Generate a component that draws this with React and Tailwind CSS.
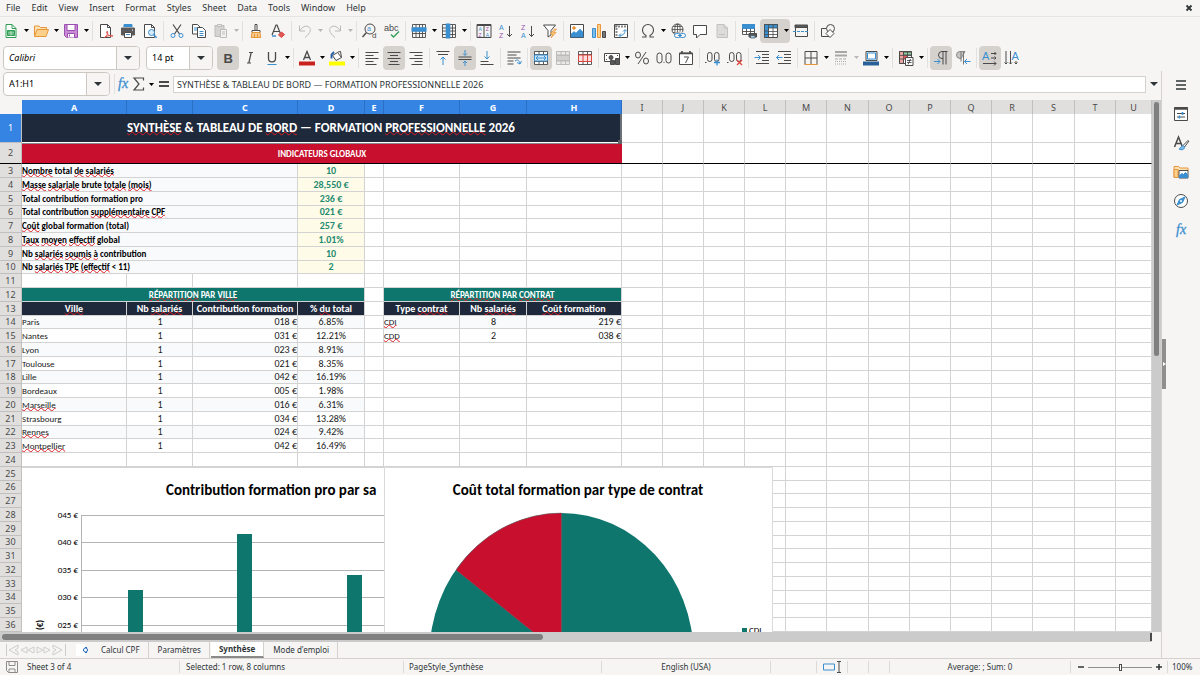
import { useState } from 'react'

// --- Sheet data ----------------------------------------------------------
// Words between ~ are flagged by the spell checker
const INDICATORS = [
  ['~Nombre~ total ~de~ ~salariés~', '10'],
  ['~Masse~ ~salariale~ brute ~totale~ ~(mois)~', '28,550 €'],
  ['Total contribution formation pro', '236 €'],
  ['Total contribution ~supplémentaire~ ~CPF~', '021 €'],
  ['~Coût~ global formation (total)', '257 €'],
  ['~Taux~ ~moyen~ ~effectif~ global', '1.01%'],
  ['Nb ~salariés~ ~soumis~ ~à~ contribution', '10'],
  ['Nb ~salariés~ ~TPE~ ~(effectif~ < 11)', '2'],
]

const CITIES = [
  ['Paris', '1', '018 €', '6.85%'],
  ['Nantes', '1', '031 €', '12.21%'],
  ['Lyon', '1', '023 €', '8.91%'],
  ['Toulouse', '1', '021 €', '8.35%'],
  ['Lille', '1', '042 €', '16.19%'],
  ['Bordeaux', '1', '005 €', '1.98%'],
  ['~Marseille~', '1', '016 €', '6.31%'],
  ['Strasbourg', '1', '034 €', '13.28%'],
  ['~Rennes~', '1', '024 €', '9.42%'],
  ['~Montpellier~', '1', '042 €', '16.49%'],
]

const CONTRACTS = [
  ['~CDI~', '8', '219 €'],
  ['~CDD~', '2', '038 €'],
]

const LETTERS = 'ABCDEFGHIJKLMNOPQRSTU'.split('')
const MENUS = ['File', 'Edit', 'View', 'Insert', 'Format', 'Styles', 'Sheet', 'Data', 'Tools', 'Window', 'Help']
const SHEETS = ['Calcul CPF', 'Paramètres', 'Synthèse', "Mode d'emploi"]

const BLUE = '#3a8fd0'
const DARK = '#4a4a4a'
const GREEN = '#2f9e55'
const ORANGE = '#e8963a'
const RED = '#d9453c'
const PURPLE = '#9b4fb0'

// --- Icons ---------------------------------------------------------------
const Svg = ({ children }) => (
  <svg viewBox="0 0 16 16" className="h-4 w-4 shrink-0 overflow-visible fill-none stroke-[#4a4a4a]" aria-hidden="true">{children}</svg>
)

const T = ({ x, y, size = 8, color = DARK, bold, children }) => (
  <text x={x} y={y} fontSize={size} fill={color} stroke="none" fontWeight={bold ? 700 : 400} fontFamily="Liberation Sans, sans-serif">{children}</text>
)

const ICONS = {
  new: <><path d="M3 1.500h6l4 4v9H3z" fill="#fff" stroke={GREEN} /><path d="M9 1.500v4h4" stroke={GREEN} /><path d="M4.500 7.500h7v5h-7z" fill={GREEN} stroke={GREEN} /><path d="M5 9.200h6M5 11h6M8 8v4.500" stroke="#d8f0df" strokeWidth=".7" /></>,
  open: <><path d="M1.500 13.500V3h4.500l1.500 1.500h6V7" fill="#fbe2b4" stroke={ORANGE} /><path d="M1.500 13.500L4 6.500h11.500l-2.500 7z" fill="#fbd08a" stroke={ORANGE} /></>,
  save: <><path d="M1.500 1.500h13v13h-11l-2-2z" fill="#c98bd6" stroke={PURPLE} /><path d="M4 1.500h8v6H4z" fill="#fff" stroke={PURPLE} /><path d="M4.500 14.500v-4h7v4" fill="#fff" stroke={PURPLE} /><path d="M6.500 11.500v2" stroke={PURPLE} /></>,
  pdf: <><path d="M2.500 1.500h7l3 3v10h-10z" fill="#fff" /><path d="M9.500 1.500v3h3" /><path d="M6.500 14.500c2.500-1.500 3.500-3.500 3-6-.8-.6-1.200.4-.6 1.600 1 2 3 3.200 5.600 3.200 1-.4.200-1.200-2-.9-2.400.3-4.600 1-6 2.100z" fill="#fff" stroke={RED} strokeWidth=".9" /></>,
  print: <><path d="M4 4V1.500h8V4" fill={BLUE} stroke={BLUE} /><path d="M1.500 5h13v7h-13z" fill="#5a5a5a" stroke="#5a5a5a" /><path d="M4.500 9.500h7v5h-7z" fill="#fff" /><path d="M6 11.500h4" stroke={BLUE} /><path d="M12 7h1" stroke="#fff" /></>,
  preview: <><path d="M2.500 1.500h7l3 3v10h-10z" fill="#fff" /><path d="M9.500 1.500v3h3" /><circle cx="9.500" cy="9.500" r="3" fill="#d7eaf8" stroke={BLUE} /><path d="M11.700 11.700l3 3" stroke={BLUE} strokeWidth="1.400" /></>,
  cut: <><path d="M4 1.500l6.500 9.500M12 1.500L5.500 11" strokeWidth="1.200" /><circle cx="4" cy="12.500" r="2" stroke={BLUE} /><circle cx="12" cy="12.500" r="2" stroke={BLUE} /></>,
  copy: <><path d="M1.500 1.500h5l3 3v6.500h-8z" fill="#fff" /><path d="M3 5h4M3 7h4" stroke={BLUE} /><path d="M6.500 4.500h5l3 3v7h-8z" fill="#fff" /><path d="M8.500 8.500h4M8.500 10.500h4M8.500 12.500h4" stroke={BLUE} /></>,
  paste: <g stroke="#bdbbb9"><path d="M2 2.500h9v11H2z" fill="#d6d4d2" /><path d="M4.500 1.500h4v2h-4z" fill="#eee" /><path d="M7.500 6.500h6v8h-6z" fill="#f4f3f2" /><path d="M9 9h3M9 11h3" /></g>,
  clone: <><path d="M7 1.500h2v6H7z" fill="#fff" /><path d="M4 7.500h8v2H4z" fill="#fff" /><path d="M4 9.500l-.8 5h9.600l-.8-5z" fill="#f7c98f" stroke={ORANGE} /><path d="M6.500 11v3M9.500 11v3" stroke={ORANGE} /></>,
  clear: <><path d="M2 12L6 2h1l4 10M3.500 8.500h6" strokeWidth="1.200" /><path d="M2 13h4" stroke={BLUE} strokeWidth="1.500" /><path d="M8.500 12l3-3 3 2.500-3 3z" fill="#e4575a" stroke={RED} /></>,
  undo: <path d="M2.500 2.500v5.500H8M3 7.500C5.500 3.500 8.500 2.500 11 3.500c4 2 3 6-3 11" stroke="#bdbbb9" />,
  redo: <path d="M13.500 2.500v5.500H8M13 7.500C10.500 3.500 7.500 2.500 5 3.500c-4 2-3 6 3 11" stroke="#bdbbb9" />,
  find: <><circle cx="8" cy="6" r="5" stroke={DARK} /><path d="M4.500 9.500l-4 4.500" strokeWidth="1.400" /><T x={5} y={8} size={7} color={BLUE}>a</T><T x={10} y={15} size={8}>d</T></>,
  spell: <><T x={0} y={8} size={9}>abc</T><path d="M7 11.500l2.500 2.500L15 8.500" stroke={GREEN} strokeWidth="1.300" /></>,
  row: <><path d="M1.500 1.500h13v13h-13zM1.500 10.500h13M5 1.500v13M8.500 1.500v13M11.500 1.500v13" fill="none" strokeWidth=".9" /><path d="M.8 4.500h14.400v4H.8z" fill={BLUE} stroke={BLUE} strokeWidth=".6" /></>,
  column: <><path d="M1.500 1.500h13v13h-13zM1.500 5h13M1.500 8h13M1.500 11.500h13M11.500 1.500v13" strokeWidth=".9" /><path d="M5 .8h4v14.400H5z" fill={BLUE} stroke={BLUE} strokeWidth=".6" /></>,
  sort: <><path d="M1 1.500h14v13H1zM8 2v12.500" /><path d="M1 2h14" strokeWidth="2" /><T x={2.500} y={8} size={5} color={BLUE}>A</T><T x={2.500} y={13.800} size={5} color={PURPLE}>Z</T><T x={9.800} y={8} size={5} color={PURPLE}>Z</T><T x={9.800} y={13.800} size={5} color={BLUE}>A</T></>,
  asc: <><T x={1} y={6.500} size={7} color={BLUE}>A</T><T x={1} y={15} size={7} color={PURPLE}>Z</T><path d="M11.500 3v10.500M9 11l2.500 2.500L14 11" /></>,
  desc: <><T x={1} y={6.500} size={7} color={PURPLE}>Z</T><T x={1} y={15} size={7} color={BLUE}>A</T><path d="M11.500 3v10.500M9 11l2.500 2.500L14 11" /></>,
  filter: <><path d="M1.500 2h12L9 7.500V12l-3 2V7.500z" fill="#fff" /><path d="M12.500 6L8.500 11h2.500l-2 4 5-5.500h-2.500L14.500 6z" fill="#fbd08a" stroke={ORANGE} strokeWidth=".8" /></>,
  image: <><path d="M1.500 1.500h13v13h-13z" fill="#fff" /><path d="M2 14v-3l3-2.500 2 1.500 4-4 3 3v5z" fill={BLUE} stroke={BLUE} strokeWidth=".5" /><circle cx="5" cy="5" r="1.300" fill={ORANGE} stroke={ORANGE} /></>,
  chart: <><path d="M1.500 5.500h3v9h-3z" fill="#7fbbe6" stroke={BLUE} /><path d="M6.500 1.500h3v13h-3z" fill="#fbd08a" stroke={ORANGE} /><path d="M11.500 8.500h3v6h-3z" fill="#777" /></>,
  pivot: <><path d="M1.500 1.500h13v13h-13z" fill="#fff" /><path d="M2 3.500h12M3.500 2v12" stroke="#888" strokeWidth="2" strokeDasharray="2 1" /><path d="M6.500 12.500c4 0 5.500-2 5.500-5.500M10 8.500l2-2 2 2M8 10.500l-2 2 2 2" stroke={BLUE} /></>,
  omega: <path d="M2 14h4v-1.500C3.500 11 2.500 9.500 2.500 7a5.500 5.500 0 0111 0c0 2.500-1 4-3.500 5.500V14h4" strokeWidth="1.100" />,
  link: <><circle cx="7.500" cy="6.500" r="5.500" /><path d="M2 6.500h11M7.500 1v11M3 3.500h9M3 9.500h6" strokeWidth=".8" /><ellipse cx="7.500" cy="6.500" rx="2.700" ry="5.500" strokeWidth=".8" /><path d="M5 9.500h11v6H5z" fill="#f6f5f4" stroke="none" /><rect x="4.500" y="10.500" width="6" height="4" rx="2" stroke={BLUE} /><rect x="9.500" y="10.500" width="6" height="4" rx="2" stroke={BLUE} /><path d="M8 12.500h4" stroke={BLUE} /></>,
  comment: <path d="M1.500 2.500h13v9H8l-3.500 3.500v-3.500h-3z" fill="#fff" />,
  header: <g stroke="#c4c2c0"><path d="M3 1.500h7l3.500 3.500v9.500H3z" fill="#dedcda" /><path d="M10 1.500V5h3.500M5 11.500h6" /></g>,
  printArea: <><path d="M1.500 1.500h12v10h-12zM1.500 8.500h12M5.500 1.500v10M9.500 1.500v10" fill="#fff" strokeWidth=".9" /><path d="M1.500 1.500h12v4h-12z" fill={BLUE} stroke={BLUE} /><path d="M8 10.500h7.500v3.500H8z" fill="#5a5a5a" /><path d="M9.500 12.500h4.500v2.500H9.500z" fill="#9ed0f2" strokeWidth=".7" /></>,
  freeze: <><path d="M1.500 1.500h13v13h-13z" fill="#fff" /><path d="M1.500 1.500h13v3.500h-9v9.500h-4z" fill={BLUE} stroke={DARK} strokeWidth=".8" /><path d="M5.500 5v9.500M10 1.500v13M5.500 8.500h9M5.500 11.500h9M1.500 8h4M1.500 11.500h4M5.500 1.500v4" strokeWidth=".8" /></>,
  split: <><path d="M2 2h12.500v2.500H2z" fill="#5a5a5a" /><path d="M2.500 4v9.500h12V4" /><path d="M0 8.500h16" stroke={BLUE} strokeDasharray="3 1" /></>,
  shapes: <><path d="M1.500 5.500h8v8h-8z" /><circle cx="10.500" cy="5.500" r="4" fill="#f6f5f4" /><path d="M6 10.500l4-4 4 4-4 4z" fill="#fff" /></>,
  bold: <T x={3.500} y={12.500} size={13} bold>B</T>,
  italic: <path d="M7 2.500h4M5 13h4M9.200 2.500L6.800 13" strokeWidth="1.200" />,
  underline: <><path d="M4.500 2v6.500c0 4.500 7 4.500 7 0V2" strokeWidth="1.300" /><path d="M3.500 14.500h9" stroke={BLUE} /></>,
  fontColor: <><path d="M4.500 10L8 1.500 11.500 10M5.500 7.500h5" strokeWidth="1.300" /><path d="M0 11.500h16v4H0z" fill="#c9211e" stroke="none" /></>,
  highlight: <><path d="M3.500 5.500l5-3 4 5-5.500 3z" fill="#fff" /><path d="M9 2l2.500-.5 1 6" /><path d="M5 2L2.500 4.500v4" stroke="#1f5fa8" strokeWidth="1.800" /><path d="M0 11.500h16v4H0z" fill="#ffff00" stroke="none" /></>,
  left: <path d="M1.500 2.500h13M1.500 5.500h8M1.500 8.500h13M1.500 11.500h8M1.500 14.500h11" />,
  center: <path d="M1.500 2.500h13M4 5.500h8M1.500 8.500h13M4 11.500h8M2.500 14.500h11" />,
  right: <path d="M1.500 2.500h13M6.500 5.500h8M1.500 8.500h13M6.500 11.500h8M3.500 14.500h11" />,
  top: <><path d="M1.500 1.500h13M3 4.500h10" /><path d="M8 15V7M5.500 9.500L8 7l2.500 2.500" stroke={BLUE} /></>,
  middle: <><path d="M1.500 7h13M1.500 9.500h13" /><path d="M8 0v5M6 3.500L8 5.500l2-2M8 16v-5M6 13l2-2 2 2" stroke={BLUE} /></>,
  bottom: <><path d="M1.500 14.500h13M1.500 11.500h8" /><path d="M8 1v8M5.500 6.500L8 9l2.500-2.500" stroke={BLUE} /></>,
  wrap: <><path d="M1.500 2h13M1.500 5h9M1.500 8h13M1.500 11h6M1.500 14h6" /><path d="M9 11c3-2 4-1 5 3M11 12.500l3 1.500 1.500-3" stroke={BLUE} /></>,
  merge: <><path d="M1.500 1.500h13v13h-13zM1.500 4.500h13M1.500 11.500h13M6 1.500v3M10.500 1.500v3M6 11.500v3M10.500 11.500v3" fill="#fff" strokeWidth=".9" /><path d="M1.500 5h13v6h-13z" fill="#cfe6f7" stroke={BLUE} /><path d="M3 8h10M5 6L3 8l2 2M11 6l2 2-2 2" stroke={BLUE} /></>,
  unmerge: <g stroke="#bdbbb9"><path d="M1.500 1.500h13v13h-13zM1.500 5h13M1.500 11h13M6 1.500V5M10.500 1.500V5M6 11v3.500M10.500 11v3.500" fill="#eceae9" /><path d="M1.500 5.500h13v5h-13z" fill="#d2d0ce" /></g>,
  splitCells: <><path d="M1.500 1.500h13v13h-13zM1.500 4.500h13M1.500 11.500h13M6 1.500v3M10.500 1.500v3M6 11.500v3M10.500 11.500v3" fill="#fff" strokeWidth=".9" /><path d="M1.500 5h13v6.500h-13zM6 5v6.500M10.500 5v6.500" fill="#fbe0de" stroke={RED} /></>,
  currency: <><path d="M.5 3.500h15v8H.5z" fill="#fff" /><circle cx="7" cy="7.500" r="2" fill="#5a5a5a" /><path d="M2 5.500h1M13 5.500h1M2 9.500h1" /><path d="M6.500 10.500h4v4h-4zM11.500 8.500h4v6h-4z" fill="#5a5a5a" /></>,
  percent: <><ellipse cx="4" cy="5" rx="2.500" ry="3" /><ellipse cx="12" cy="11" rx="2.500" ry="3" /><path d="M12 2L4 14" /></>,
  number: <><rect x="1" y="3" width="5" height="10" rx="2.500" /><rect x="10" y="3" width="5" height="10" rx="2.500" /><path d="M7.500 12.500h1" /></>,
  date: <><path d="M1.500 3h13v11.500h-13z" fill="#fff" /><path d="M1.500 3.500h13M4 1v3M12 1v3" strokeWidth="1.600" /><path d="M6 7h4.500L7.500 13" /></>,
  addDec: <><rect x="2.500" y="2.500" width="4.500" height="9" rx="2.200" /><rect x="9.500" y="2.500" width="4.500" height="9" rx="2.200" /><path d="M0 12.500h1.500" /><path d="M9 12.500h6M12 9.500v6" stroke={BLUE} strokeWidth="1.300" /></>,
  delDec: <><rect x="2.500" y="2.500" width="4.500" height="9" rx="2.200" /><rect x="9.500" y="2.500" width="4.500" height="9" rx="2.200" /><path d="M0 12.500h1.500" /><path d="M10 10l5 5M15 10l-5 5" stroke={RED} strokeWidth="1.300" /></>,
  indent: <><path d="M2 1.500h13M8 4.500h7M8 7.500h7M8 10.500h7M2 13.500h13" /><path d="M.5 7.500h6M4 5l2.500 2.500L4 10" stroke={BLUE} /></>,
  outdent: <><path d="M2 1.500h13M8 4.500h7M8 7.500h7M8 10.500h7M2 13.500h13" /><path d="M.5 7.500h6M3 5L.5 7.500 3 10" stroke={BLUE} /></>,
  borders: <><path d="M2 14.500v-13h12v13M8 1.500v13M2 8h12" fill="none" /><path d="M1.500 14.500h13" stroke={ORANGE} /></>,
  lineStyle: <g stroke="#a9a7a5"><path d="M2 2h12" strokeWidth="2" /><path d="M2 5.500h12" strokeWidth="2" /><path d="M2 9h12" strokeDasharray="3 1" /><path d="M2 11.500h12M2 14h12" strokeDasharray="1 1" /></g>,
  lineColor: <><path d="M3 1.500h11v9H3z" fill="#e6f2fb" stroke={DARK} /><path d="M4.500 3h8v6h-8z" fill="#fff" stroke={BLUE} /><path d="M0 11.500h16v4H0z" fill="#2a6099" stroke="none" /></>,
  cond: <><path d="M1.500 1.500h12v12h-12z" fill="#fff" /><path d="M1.500 1.500h4v12h-4z" fill="#e9a49f" /><path d="M5.500 2h8v3h-8z" fill="#8ccf9f" /><path d="M5.500 5.500h4v3.500h-4z" fill="#e4575a" stroke="none" /><path d="M1.500 5.500h12M1.500 9h12M9.500 1.500v12" strokeWidth=".8" /><path d="M7.500 7.500h7.500v8H7.500z" fill="#fff" /><path d="M9 10.500h4.500M9 12.500h4.500M12.500 9l-2.500 5.500" strokeWidth=".9" /></>,
  ltr: <><path d="M14.500 1.500H9a3.500 3.500 0 000 7h1M10 1.500v13M13 1.500v13" /><path d="M1 11.500h6M4.500 9L7 11.500 4.500 14" stroke={BLUE} /></>,
  rtl: <><path d="M10 1.500H5a3.500 3.500 0 000 7h1z" fill="#c8c6c4" stroke="#8d8b89" /><path d="M6 1.500v10M8.500 1.500v13" stroke="#777" /><path d="M9.500 11.500h6M12 9l-2.500 2.500L12 14" stroke={BLUE} /></>,
  horizontal: <><T x={0} y={10} size={11} color={BLUE}>A</T><path d="M9 3.500h5M12.500 2L14 3.500 12.500 5M9 8h5M12.500 6.500L14 8l-1.500 1.500M1 13.500h13M12 11.500l2 2-2 2" /></>,
  vertical: <><T x={7.500} y={10} size={11} color={BLUE}>A</T><path d="M2 1v13M.5 12.500L2 14l1.500-1.500M6.500 1v13M5 12.500L6.500 14 8 12.500M12 11v3M10.500 12.500L12 14l1.500-1.500" /></>,
  fx: <text x="3" y="12" fontSize="14" fontStyle="italic" fontFamily="Liberation Serif, serif" fill={BLUE} stroke={BLUE} strokeWidth=".3">fx</text>,
  sigma: <path d="M12.500 4.500V2H3l5 6-5 6h9.500v-2.500" strokeWidth="1.200" />,
  equals: <path d="M3 6h10M3 10h10" strokeWidth="1.800" />,
  menu: <path d="M3 4h10M3 8h10M3 12h10" strokeWidth="1.500" stroke="#2e3436" />,
  props: <><path d="M1.500 1.500h13v13h-13z" fill="#fff" /><path d="M1.500 2.500h13" strokeWidth="2.500" /><path d="M4 7.500h8M4 11h8" stroke={DARK} /><path d="M9.500 6v3M6.500 9.500v3" stroke={BLUE} strokeWidth="1.600" /></>,
  styles: <><path d="M1.500 12L5.500 2l4 10M3 8.500h5" strokeWidth="1.500" /><path d="M15.500 5L10 10.500l1.500 1.500L16 6" fill="#fff" /><path d="M10 10.500c-2 0-2 3-4 3.500 3 1.500 5.500.5 5.500-2z" fill="#7fbbe6" stroke={BLUE} /></>,
  gallery: <><path d="M1 13.500V2.500h4.500L7 4h8v3" fill="#fbe2b4" stroke={ORANGE} /><path d="M1 13.500V5.500h4v8z" fill="#fbd08a" stroke={ORANGE} /><path d="M6 6.500h9v7.500H6z" fill="#fff" /><path d="M6.500 13.500v-2l2.500-2 1.500 1 2-2 2 2v3z" fill={BLUE} stroke={BLUE} /></>,
  navigator: <><circle cx="8" cy="8" r="6.500" fill="#fff" /><path d="M12 4L9.500 9.500 4 12l2.500-5.500z" fill={BLUE} stroke={BLUE} /><circle cx="8" cy="8" r="1" fill="#fff" stroke="none" /></>,
  diskette: <><path d="M2.500 2.500h11v11h-9l-2-2z" stroke="#8d8b89" /><path d="M5 2.500h6v4H5zM5 13.500v-3.500h6v3.500" stroke="#8d8b89" /></>,
}

// --- Toolbars ------------------------------------------------------------
// '|' is a separator, 'v' adds a drop-down ('vd' a disabled one), 'on' a pressed button
const STANDARD = [
  ['new', 'New', 'v'], ['open', 'Open', 'v'], ['save', 'Save', 'v'], '|',
  ['pdf', 'Export as PDF'], ['print', 'Print'], ['preview', 'Print preview'], '|',
  ['cut', 'Cut'], ['copy', 'Copy'], ['paste', 'Paste', 'vd'], '|',
  ['clone', 'Clone formatting'], ['clear', 'Clear formatting'], '|',
  ['undo', 'Undo', 'vd'], ['redo', 'Redo', 'vd'], '|',
  ['find', 'Find and replace'], ['spell', 'Spelling'], '|',
  ['row', 'Row', 'v'], ['column', 'Column', 'v'], '|',
  ['sort', 'Sort'], ['asc', 'Sort ascending'], ['desc', 'Sort descending'], ['filter', 'AutoFilter'], '|',
  ['image', 'Insert image'], ['chart', 'Insert chart'], ['pivot', 'Insert pivot table'], '|',
  ['omega', 'Special character', 'v'], ['link', 'Insert hyperlink'], ['comment', 'Insert comment'], ['header', 'Headers and footers'], '|',
  ['printArea', 'Define print area'], ['freeze', 'Freeze rows and columns', 'v', 'on'], ['split', 'Split window'], '|',
  ['shapes', 'Show draw functions'],
]

const FORMATTING = [
  ['bold', 'Bold', '', 'on'], ['italic', 'Italic'], ['underline', 'Underline', 'v'], '|',
  ['fontColor', 'Font color', 'v'], ['highlight', 'Background color', 'v'], '|',
  ['left', 'Align left'], ['center', 'Center horizontally', '', 'on'], ['right', 'Align right'], '|',
  ['top', 'Align top'], ['middle', 'Center vertically', '', 'on'], ['bottom', 'Align bottom'], '|',
  ['wrap', 'Wrap text'], '|',
  ['merge', 'Merge and center cells', '', 'on'], ['unmerge', 'Merge cells'], ['splitCells', 'Unmerge cells'], '|',
  ['currency', 'Format as currency', 'v'], ['percent', 'Format as percent'], ['number', 'Format as number'], ['date', 'Format as date'], '|',
  ['addDec', 'Add decimal place'], ['delDec', 'Delete decimal place'], '|',
  ['indent', 'Increase indent'], ['outdent', 'Decrease indent'], '|',
  ['borders', 'Borders', 'v'], ['lineStyle', 'Border style', 'vd'], ['lineColor', 'Border color', 'v'], '|',
  ['cond', 'Conditional', 'v'], '|',
  ['ltr', 'Left-to-right', '', 'on'], ['rtl', 'Right-to-left'], '|',
  ['horizontal', 'Text direction left to right', '', 'on'], ['vertical', 'Text direction top to bottom'],
]

const Caret = ({ disabled }) => (
  <svg viewBox="0 0 5 3" className={`h-[3px] w-[5px] ${disabled ? 'fill-[#b9b7b5]' : 'fill-black'}`} aria-hidden="true"><path d="M0 0h5L2.500 3z" /></svg>
)

const Tools = ({ items }) => items.map((item, i) => {
  if (item === '|') return <span key={i} className="flex h-5 w-[5px] shrink-0 justify-center"><span className="w-px bg-[#e3e1df]" /></span>
  const [icon, label, drop, on] = item
  return (
    <span key={i} className={`flex h-6 shrink-0 rounded ${on ? 'bg-[#d5d1cd]' : ''}`}>
      <button type="button" aria-label={label} className="flex w-[22px] items-center justify-center"><Svg>{ICONS[icon]}</Svg></button>
      {drop && <button type="button" aria-label={`${label} options`} className="flex w-2 items-center justify-center"><Caret disabled={drop === 'vd'} /></button>}
    </span>
  )
})

const Combo = ({ label, value, className = '', inputClass = '' }) => (
  <div className={`flex h-6 shrink-0 overflow-hidden rounded border border-[#cdc7c2] bg-white ${className}`}>
    <input aria-label={label} defaultValue={value} className={`min-w-0 flex-1 px-[5px] text-[9px] text-black outline-none ${inputClass}`} />
    <button type="button" aria-label={`${label} list`} className="flex w-[23px] items-center justify-center border-l border-[#cdc7c2] bg-[#f6f5f4]">
      <svg viewBox="0 0 8 4" className="h-1 w-2 fill-[#2e3436]" aria-hidden="true"><path d="M0 0h8L4 4z" /></svg>
    </button>
  </div>
)

// --- Grid ----------------------------------------------------------------
const Words = ({ text }) => text.split('~').map((part, i) =>
  i % 2 ? <span key={i} className="underline decoration-[#e01b24] decoration-wavy decoration-1 -underline-offset-1 [text-decoration-skip-ink:none]">{part}</span> : part
)

const Cell = ({ text = '', span = 1, className = '' }) => (
  <td colSpan={span} className={`overflow-hidden whitespace-nowrap border-b border-r border-[#d3d3d3] p-0 leading-[12px] ${className}`}>
    <Words text={text} />
  </td>
)

const Blank = ({ count }) => Array.from({ length: count }, (_, i) => <Cell key={i} />)

const headCell = 'bg-[#1e293b] text-center text-[10px] font-bold text-white'
const bandCell = 'bg-[#0f766e] text-center text-[9px] font-bold text-white'

function RowCells({ n }) {
  if (n >= 3 && n <= 10) {
    const [label, value] = INDICATORS[n - 3]
    return (
      <>
        <Cell span={3} text={label} className="bg-[#f8fafc] text-[9px] font-bold text-black" />
        <Cell text={value} className="bg-[#fefce8] text-center text-[10px] font-bold text-[#1f8a70]" />
        <Blank count={17} />
      </>
    )
  }
  if (n === 12) {
    return (
      <>
        <Cell span={4} text="~RÉPARTITION~ PAR ~VILLE~" className={bandCell} />
        <Cell />
        <Cell span={3} text="~RÉPARTITION~ PAR ~CONTRAT~" className={bandCell} />
        <Blank count={13} />
      </>
    )
  }
  if (n === 13) {
    return (
      <>
        {['~Ville~', 'Nb ~salariés~', 'Contribution formation', '% ~du~ total'].map((t) => <Cell key={t} text={t} className={headCell} />)}
        <Cell />
        {['Type ~contrat~', 'Nb ~salariés~', '~Coût~ formation'].map((t) => <Cell key={t} text={t} className={headCell} />)}
        <Blank count={13} />
      </>
    )
  }
  if (n >= 14 && n <= 23) {
    const [city, count, amount, share] = CITIES[n - 14]
    const contract = CONTRACTS[n - 14]
    const stripe = n % 2 ? 'bg-white' : 'bg-[#f8fafc]'
    return (
      <>
        <Cell text={city} className={`align-bottom text-[9px] ${stripe}`} />
        <Cell text={count} className={`pl-px text-center text-[10px] ${stripe}`} />
        <Cell text={amount} className={`text-right text-[10px] ${stripe}`} />
        <Cell text={share} className={`text-center text-[10px] ${stripe}`} />
        <Cell />
        {contract ? (
          <>
            <Cell text={contract[0]} className={`align-bottom text-[9px] ${stripe}`} />
            <Cell text={contract[1]} className={`pl-px text-center text-[10px] ${stripe}`} />
            <Cell text={contract[2]} className={`text-right text-[10px] ${stripe}`} />
          </>
        ) : <Blank count={3} />}
        <Blank count={13} />
      </>
    )
  }
  return <Blank count={21} />
}

const rowHead = 'border-b border-r border-[#c2c0be] p-0 text-center font-[Noto_Sans,sans-serif] text-[9px] font-normal leading-[12px]'

function Grid() {
  return (
    <table className="w-full table-fixed border-separate border-spacing-0 font-[Carlito,Lato,sans-serif] text-[#1a1a1a]">
      <colgroup>
        <col className="w-[22px]" />
        <col className="w-[105px]" />
        <col className="w-[66px]" />
        <col className="w-[105px]" />
        <col className="w-[67px]" />
        <col className="w-[19px]" />
        <col className="w-[76px]" />
        <col className="w-[67px]" />
        <col className="w-[95px]" />
        {LETTERS.slice(8, 20).map((l) => <col key={l} className={l === 'N' || l === 'S' ? 'w-[42px]' : 'w-[41px]'} />)}
        <col />
      </colgroup>
      <thead>
        <tr className="h-[14px]">
          <td className="bg-[#f6f5f4] p-0" />
          {LETTERS.map((l, i) => (
            <th key={l} scope="col" className={`border-r p-0 text-center font-[Noto_Sans,sans-serif] text-[9px] leading-[13px] ${i < 8 ? 'border-[#2a6fc4] bg-[#3584e4] font-bold text-white' : 'border-[#c2c0be] bg-[#e0dfde] font-normal text-[#4a4a4a]'}`}>{l}</th>
          ))}
        </tr>
      </thead>
      <tbody>
        <tr className="h-[29px]">
          <th scope="row" className={`${rowHead} bg-[#3584e4] font-bold text-white`}>1</th>
          <td colSpan={8} className="relative border-b border-r-2 border-b-white border-r-[#6b6f76] bg-[#1e293b] p-0 text-center text-[13px] font-bold leading-[16px] text-white">
            <Words text="~SYNTHÈSE~ & TABLEAU DE ~BORD~ — FORMATION ~PROFESSIONNELLE~ 2026" />
            <span className="absolute -bottom-0.5 -right-0.5 h-1 w-1 bg-[#5f6368]" />
          </td>
          <Blank count={13} />
        </tr>
        <tr className="h-[21px]">
          <th scope="row" className={`${rowHead} border-b-black bg-[#e0dfde] text-[#4a4a4a]`}>2</th>
          <td colSpan={8} className="border-b border-t border-b-black border-t-[#85888c] bg-[#c8102e] p-0 text-center text-[9px] font-bold leading-[12px] text-white">INDICATEURS GLOBAUX</td>
          {LETTERS.slice(8).map((l) => <td key={l} className="border-b border-r border-[#d3d3d3] border-b-black p-0" />)}
        </tr>
        {Array.from({ length: 34 }, (_, i) => i + 3).map((n) => (
          <tr key={n} className={n % 4 === 2 ? 'h-[13px]' : 'h-[14px]'}>
            <th scope="row" className={`${rowHead} bg-[#e0dfde] text-[#4a4a4a]`}>{n}</th>
            <RowCells n={n} />
          </tr>
        ))}
      </tbody>
    </table>
  )
}

function BarChart() {
  const ticks = ['045 €', '040 €', '035 €', '030 €', '025 €']
  const bars = [[106, 123], [215, 67], [325, 108]]
  return (
    <svg className="absolute bottom-0 left-[22px] top-[367px] w-[362px] bg-white font-[Carlito,Lato,sans-serif]" height="165" role="img" aria-label="Contribution formation pro">
      <path d="M0 .5h362" stroke="#d3d3d3" />
      <text x="144" y="28" className="fill-black text-[15px] font-bold">Contribution formation pro par sa</text>
      {ticks.map((t, i) => (
        <g key={t}>
          <path d={`M59 ${48.5 + Math.round(i * 27.4)}h303`} stroke="#b3b3b3" />
          <text x="56" y={51 + Math.round(i * 27.4)} textAnchor="end" className="fill-black text-[9px]">{t}</text>
        </g>
      ))}
      <path d="M59.500 48v117" stroke="#b3b3b3" />
      {bars.map(([x, y]) => <rect key={x} x={x} y={y} width="15" height={165 - y} fill="#0f766e" />)}
      <text transform="translate(21 163) rotate(-90)" className="fill-black text-[9px] font-bold">(€)</text>
    </svg>
  )
}

function PieChart() {
  return (
    <svg className="absolute bottom-0 left-[384px] top-[367px] w-[389px] bg-white font-[Carlito,Lato,sans-serif]" height="165" role="img" aria-label="Coût total formation">
      <path d="M.5 165V.5h388V165" fill="none" stroke="#d9d9d9" />
      <ellipse cx="177.500" cy="188" rx="132" ry="142" fill="#0f766e" />
      <path d="M177.500 188V46A132 142 0 0072 103z" fill="#c8102e" stroke="#6b6b6b" strokeWidth=".5" />
      <text x="194" y="28" textAnchor="middle" className="fill-black text-[15px] font-bold">Coût total formation par type de contrat</text>
      <rect x="358" y="161" width="5" height="5" fill="#0f766e" />
      <text x="365" y="166" className="fill-black text-[9px]">CDI</text>
    </svg>
  )
}

const Divider = () => <span className="h-3 w-px shrink-0 bg-[#dcdad8]" />

export default function App() {
  const [sheet, setSheet] = useState('Synthèse')
  const [zoom, setZoom] = useState(50)

  return (
    <div className="flex h-screen flex-col overflow-hidden bg-[#f6f5f4] font-[Noto_Sans,sans-serif] text-[9px] text-[#2e3436]">
      <nav className="flex h-[17px] shrink-0 items-center gap-[11px] border-b border-[#e6e4e2] pl-[6px] pr-[7px]">
        {MENUS.map((m) => <button key={m} type="button">{m}</button>)}
        <button type="button" aria-label="Close document" className="ml-auto">
          <svg viewBox="0 0 8 8" className="h-2 w-2 stroke-[#2e3436]" aria-hidden="true"><path d="M1.500 1.500l5 5M6.500 1.500l-5 5" strokeWidth="1.800" /></svg>
        </button>
      </nav>

      <div className="flex h-[27px] shrink-0 items-center"><Tools items={STANDARD} /></div>

      <div className="flex h-[27px] shrink-0 items-center pl-[3px]">
        <Combo label="Font name" value="Calibri" className="mr-[6px] w-[137px]" inputClass="italic" />
        <Combo label="Font size" value="14 pt" className="mr-[4px] w-[67px]" />
        <Tools items={FORMATTING} />
      </div>

      <div className="flex min-h-0 flex-1">
        <main className="flex min-w-0 flex-1 flex-col">
          <div className="flex h-[29px] shrink-0 items-center pb-[3px] pl-[3px]">
            <Combo label="Name box" value="A1:H1" className="w-[107px]" />
            <span className="ml-1 h-5 w-px bg-[#e3e1df]" />
            <button type="button" aria-label="Function wizard" className="flex w-4 justify-center"><Svg>{ICONS.fx}</Svg></button>
            <button type="button" aria-label="Select function" className="flex w-4 justify-center"><Svg>{ICONS.sigma}</Svg></button>
            <button type="button" aria-label="Function list" className="flex w-2 justify-center"><Caret /></button>
            <button type="button" aria-label="Formula" className="mx-px flex w-4 justify-center"><Svg>{ICONS.equals}</Svg></button>
            <input aria-label="Input line" defaultValue="SYNTHÈSE & TABLEAU DE BORD — FORMATION PROFESSIONNELLE 2026" className="h-[17px] min-w-0 flex-1 border border-[#d5d1cd] bg-white px-[3px] text-[9px] outline-none" />
            <button type="button" aria-label="Expand formula bar" className="flex w-[15px] justify-center">
              <svg viewBox="0 0 8 4" className="h-1 w-2 fill-[#2e3436]" aria-hidden="true"><path d="M0 0h8L4 4z" /></svg>
            </button>
          </div>

          <div className="flex min-h-0 flex-1">
            <div className="relative min-w-0 flex-1 overflow-hidden bg-white">
              <Grid />
              <BarChart />
              <PieChart />
            </div>
            <div className="w-[9px] shrink-0 bg-[#cbcbcb] px-[2px] pt-[2px]">
              <div className="h-[48%] rounded-full bg-[#7f7f7f]" />
            </div>
          </div>

          <div className="flex h-[10px] shrink-0 items-center">
            <div className="flex h-full min-w-0 flex-1 items-center justify-between bg-[#cbcbcb] pl-[2px]">
              <div className="h-[6px] w-[47%] rounded-full bg-[#7f7f7f]" />
              <div className="h-2 w-[2px] bg-[#4a4a4a]" />
            </div>
            <div className="w-[9px]" />
          </div>

          <div className="flex h-4 shrink-0 items-center text-[8px]">
            <svg viewBox="0 0 60 12" className="ml-[6px] h-3 w-[60px] shrink-0 fill-none stroke-[#cfcdcb]" aria-hidden="true">
              <path d="M.5 0v12M12 1L3 6l9 5v-3L9 6l3-2zM21 3l-6 3 6 3zM28 3l-6 3 6 3zM31 3l6 3-6 3zM38 3l6 3-6 3zM47 1l9 5-9 5v-3l3-2-3-2zM59.500 0v12" />
            </svg>
            <button type="button" aria-label="Add sheet" className="ml-2 flex w-4 justify-center">
              <svg viewBox="0 0 12 12" className="h-3 w-3 fill-white" aria-hidden="true"><path d="M0 0h9v12H0z" /><path d="M10 3v6M7 6h6" stroke="#2a6fc4" strokeWidth="2" /><circle cx="9.500" cy="6" r="2" fill="#fff" stroke="#2a6fc4" /></svg>
            </button>
            <div role="tablist" className="ml-[3px] flex h-full items-center gap-px">
              {SHEETS.map((s) => (
                <button key={s} type="button" role="tab" aria-selected={s === sheet} onClick={() => setSheet(s)}
                  className={`h-full border-r border-r-[#d5d1cd] px-2 ${s === sheet ? 'border-b-2 border-b-[#8a8a8a] bg-white font-bold' : ''}`}>{s}</button>
              ))}
            </div>
          </div>
        </main>

        <aside className="relative flex w-[39px] shrink-0 flex-col items-center gap-[13px] border-l border-[#d5d1cd] pt-[6px]">
          {[['menu', 'Sidebar settings'], ['props', 'Properties'], ['styles', 'Styles'], ['gallery', 'Gallery'], ['navigator', 'Navigator'], ['fx', 'Functions']].map(([icon, label]) => (
            <button key={icon} type="button" aria-label={label} className="flex h-4 w-4"><Svg>{ICONS[icon]}</Svg></button>
          ))}
          <button type="button" aria-label="Hide sidebar" className="absolute left-0 top-[268px] flex h-[50px] w-1 items-center justify-center bg-[#8f8f8f]">
            <svg viewBox="0 0 3 4" className="h-1 w-[3px] fill-white" aria-hidden="true"><path d="M0 0l3 2-3 2z" /></svg>
          </button>
        </aside>
      </div>

      <footer className="flex h-[17px] shrink-0 items-center border-t border-[#d5d1cd] pl-1 text-[8px]">
        <Svg>{ICONS.diskette}</Svg>
        <span className="w-[159px] pl-[7px]">Sheet 3 of 4</span>
        <Divider />
        <span className="w-[223px] pl-[6px]">Selected: 1 row, 8 columns</span>
        <Divider />
        <span className="w-[197px] pl-[5px]">PageStyle_Synthèse</span>
        <Divider />
        <span className="w-[168px] text-center">English (USA)</span>
        <Divider />
        <span className="w-[45px]" />
        <Divider />
        <span className="flex w-[30px] items-center justify-center gap-1">
          <svg viewBox="0 0 20 12" className="h-3 w-5 fill-none" aria-hidden="true"><path d="M1.500 3h11v6h-11z" stroke={BLUE} /><path d="M15 .5h4M15 11.500h4M17 .5v11" stroke={DARK} /></svg>
        </span>
        <Divider />
        <span className="w-5" />
        <Divider />
        <span className="w-5" />
        <Divider />
        <span className="flex-1 text-center">Average: ; Sum: 0</span>
        <Divider />
        <button type="button" aria-label="Zoom out" className="ml-[6px]"><svg viewBox="0 0 8 8" className="h-2 w-2 stroke-[#2e3436]" aria-hidden="true"><path d="M1 4h6" strokeWidth="1.500" /></svg></button>
        <input type="range" aria-label="Zoom" min="0" max="100" value={zoom} onChange={(e) => setZoom(e.target.value)}
          className="mx-[3px] h-2 w-[64px] appearance-none bg-[linear-gradient(#8f8f8f,#8f8f8f)] bg-[length:100%_1px] bg-center bg-no-repeat [&::-webkit-slider-thumb]:h-[7px] [&::-webkit-slider-thumb]:w-[3px] [&::-webkit-slider-thumb]:appearance-none [&::-webkit-slider-thumb]:border [&::-webkit-slider-thumb]:border-[#4a4a4a] [&::-webkit-slider-thumb]:bg-white" />
        <button type="button" aria-label="Zoom in" className="mr-1"><svg viewBox="0 0 8 8" className="h-2 w-2 stroke-[#2e3436]" aria-hidden="true"><path d="M1 4h6M4 1v6" strokeWidth="1.500" /></svg></button>
        <Divider />
        <span className="w-[32px] pl-1">100%</span>
      </footer>
    </div>
  )
}
